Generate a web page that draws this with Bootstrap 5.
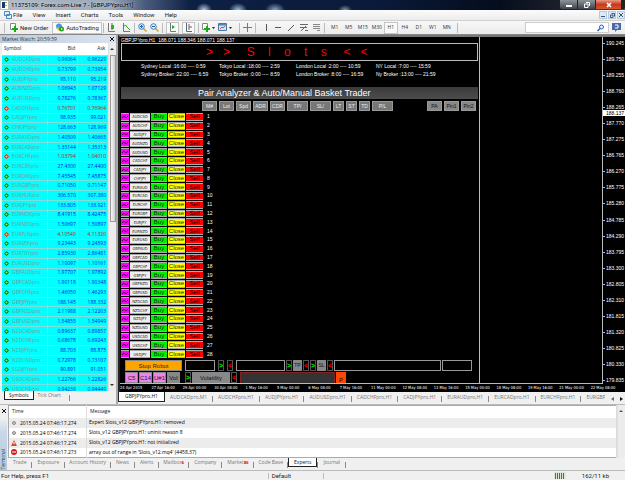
<!DOCTYPE html>
<html lang="en">
<head>
<meta charset="utf-8">
<meta name="viewport" content="width=device-width, initial-scale=1">
<title>11375109: Forex.com-Live 7 - [GBPJPYpro,H1]</title>
<link href="https://cdn.jsdelivr.net/npm/bootstrap@5.3.0/dist/css/bootstrap.min.css" rel="stylesheet">
<style>
body{font:5px/1 "Open Sans","Noto Sans",sans-serif;color:#222;background:#f0f0f0;height:100vh;overflow:hidden;white-space:nowrap}
button{font:inherit;color:inherit;background:none;border:0;padding:0;white-space:nowrap}
a{color:inherit;text-decoration:none}
svg{display:block;flex:none}
main{min-height:0}
.titlebar{height:10px;padding-left:1px;gap:3px;color:#000;background:radial-gradient(ellipse 8px 7px at 204px 10px,#b9cfe8,transparent),radial-gradient(ellipse 9px 7px at 238px 10px,#9dbfe4,transparent),radial-gradient(ellipse 10px 7px at 275px 10px,#8aa6c8,transparent),radial-gradient(ellipse 7px 5px at 345px 10px,#7f9a9a,transparent),linear-gradient(90deg,#b4bcc6 0,#9ba8b8 110px,#4a5c7e 145px,#0d2144 190px,#0a1a3a 60%,#050d1d 80%,#1c2029 90%,#4a4448)}
.titlebar h1{font:6px/10px Roboto,sans-serif;margin:0;text-shadow:0 0 3px #dde6f0}
.winbtns{height:9px;border-radius:0 0 2px 2px;overflow:hidden;gap:1px;background:#222}
.winbtns button{width:17px;background:linear-gradient(#8e9299,#3f444c);display:flex;align-items:center;justify-content:center}
.winbtns .shut{width:25px;background:linear-gradient(#e79a87,#c43a1e 50%,#d8572e)}
.menubar{height:11px;font:6px/1 Roboto,sans-serif;background:linear-gradient(#fbfbfb,#ececec);border-bottom:1px solid #d0d0d0}
.menulist{gap:10px;padding-left:1px}
.mdi{gap:1px}.mdi button{width:8px;height:8px;background:#dbe9f8;border:1px solid #b6cbe2;display:flex;align-items:center;justify-content:center}
.toolbar{height:14px;border-bottom:1px solid #888;gap:3px;background:linear-gradient(#f7f7f7,#ececec)}
.toolgroup{gap:1px;padding-left:4px}
.sep{width:1px;height:10px;background:#bbb;flex:none}
.toolbar button{display:flex;align-items:center;gap:1px}
.toolbar .text-tool{font:6px/1 Roboto,sans-serif;gap:2px;padding:0 3px}
.toolbar .pressed{background:#fafafa;border:1px solid #c4c4c4;height:12px;padding:0 2px}
.toolbar .period{width:14px;justify-content:center;color:#333;padding:0}
.searchbox{width:84px;height:11px;background:#fff;border:1px solid #ccc}
.searchbox input{border:0;font-size:6px;padding:0 2px;min-width:0;outline:0}
.watch{width:118px;flex:none;background:#f0f0f0;border-right:2px solid #a9a9a9}
.panelcap{height:8px;background:linear-gradient(90deg,#bccbdc,#dae4ef);color:#333;padding:0 2px}
.watchbox{margin-left:2px;background:#fff;overflow:hidden;min-height:0}
.quotes{border-collapse:collapse;width:100%;table-layout:fixed;height:calc(100% + 4px)}
.quotes th{height:12px;font-weight:400;background:#fff;padding:0 2px;border-bottom:1px solid #c8c8c8}
.quotes td{background:#00ffff;border:1px solid #7fdede;padding:0 1px;line-height:7px;color:#0018e8}
.quotes .num{text-align:right}
.quotes .sym{color:#7f9a9a;border-left:0;padding-left:2px}
.quotes .sym svg{display:inline-block;vertical-align:-1px;margin-right:3px}
.quotes .falling .num{color:#b02a20}
.scroller{width:8px;background:#ececec;flex:none;border-left:1px solid #ddd}
.thumb{height:48%;border:1px solid #999;background:linear-gradient(90deg,#f6f6f6,#cfcfcf);margin-left:1px}
.tabstrip{color:#777;flex:none}
.tabstrip .sel{background:#fff;border:1px solid #222;border-top:0;color:#111}
.watchtabs{height:13px}.watchtabs button{height:9px}
.chart{background:#000;color:#fff;font-family:"Liberation Sans",Arial,sans-serif;border-top:2px solid #777;border-left:2px solid #222}
.robot{flex:0 1 360px;border-right:1px solid #bbb;min-height:0}
.robotin{padding:0 1px;min-height:0}
.ohlc{height:6px;line-height:7px}
.slots{height:18px;border:1px solid #bbb;color:#f00;font-size:12px;line-height:17px;white-space:pre;padding-left:84px}
.clocks{display:grid;grid-template-columns:78px 77px 80px 1fr;padding:1px 0 0 20px;line-height:8px;color:#fff;height:17px}
.band{height:12px;margin-top:9px;font-size:9px;line-height:12px;padding-left:77px;background:linear-gradient(#3a3a3a,#4c4c4c)}
.heads{height:10px;margin-top:2px;padding:0 2px 0 81px;gap:2px}
.heads button{width:15px;background:#777;border:1px solid #999;color:#eee;line-height:8px}
.heads .wide{width:21px}.heads .slim{width:11px}
.heads .dk{color:#111;background:#888}
.pairs{margin-top:2px;grid-auto-rows:minmax(0,1fr);min-height:0}
.pair{display:grid;grid-template-columns:8px 20px 16px 17px 17px 1fr;grid-template-rows:minmax(0,1fr);gap:1px;padding-bottom:1px;min-height:0}
.pair button{line-height:5px;overflow:hidden;border:1px solid #aaa;border-width:1px 0;color:#222;min-height:0}
.pair .wave{background:#f0f;display:flex;align-items:center;justify-content:center}
.pair .nm{background:#eee;font-family:"DejaVu Sans Condensed","Liberation Sans",sans-serif;font-size:4px}
.pair .buy{background:#00f000;font-size:6px}.pair .cls{background:#ff0;font-size:6px}.pair .sell{background:#f00;font-size:6px;color:#100}
.pair span{padding-left:3px;align-self:center}
.ctl{display:flex;padding-left:4px;gap:1px;height:11px;margin-top:1px;flex:none}
.ctl>*{border:1px solid #888;display:flex;align-items:center;justify-content:center;flex:none}
.w6{width:6px}.w9{width:9px}.w13{width:13px}.w30{width:30px}.w38{width:38px}.w49{width:49px}.w57{width:57px}.w95{width:95px}.w107{width:107px}
.ctl .stop{background:orange;color:#321;font-size:6px}
.ctl .pink{background:#ee82ee;color:#222;font-size:6px}
.ctl .gry{background:#888;color:#111;font-size:6px}
.ctl .w9{font-size:5px}
.ctl .up,.ctl .dn{border-color:#555;font-size:7px;font-weight:700}
.ctl .up{color:#0f0}.ctl .dn{color:#f00}
.ctl .cell{border-color:#999}
.ctl .bar{background:#333;border-color:#822;border-bottom:0}
.ctl .flag{background:#ff4500;color:#300;border:0;width:10px;align-items:end;font-size:6px}
.ctl .gapr{margin-right:2px}.ctl .gapw{margin-right:4px}
.xaxis{height:8px;font:4px/7px "DejaVu Sans Condensed","Liberation Sans",sans-serif;display:grid;grid-template-columns:repeat(16,1fr);flex:none;margin-right:3px}
.xaxis span{min-width:0}
.plot{border-bottom:1px solid #bbb;min-height:0}
.blank{border-right:1px solid #bbb}
.yaxis{width:22px;flex:none;padding:4px 0 1px;justify-content:space-between}
.yaxis span{display:flex;align-items:center;line-height:5px}
.yaxis span::before{content:"";width:2px;height:1px;background:#bbb;margin-right:1px}
.last{position:absolute;left:0;right:0;top:21%;background:#fff;color:#000;padding-left:3px;line-height:6px}
.charttabs{height:12px;padding-right:2px;gap:6px}
.charttabs .tab{padding:0 5px;line-height:9px;height:10px;flex:none}
.charttabs .sel{padding:0 6px}
.charttabs .tab:last-child{padding-right:0}
.charttabs .sep,.logtabs .sep,.watchtabs .sep{height:6px;background:#888}
.terminal{border-top:1px solid #bbb;flex:none}
.side{width:7px;background:linear-gradient(#f0f0f0 20%,#c9d9ea 40%,#b5c8dd);flex:none;color:#234;margin-right:1px}
.side span{writing-mode:vertical-rl;transform:rotate(180deg);line-height:7px}
.log{border-collapse:collapse;width:100%;background:#fff;border:1px solid #aaa;table-layout:fixed}
.log th{font-weight:400;height:12px;padding:0 3px;border-right:1px solid #ddd}
.log td{height:10px;padding:0 2px;border-right:1px solid #ddd;color:#000}
.log tbody tr:nth-child(odd) td{background:#ececec}
.log svg{display:inline-block;vertical-align:-1px;margin-right:3px}
.log .when{width:78px}
.logtabs{height:12px}.logtabs button{padding:0 5px;height:9px;line-height:9px}
.logtabs button:nth-of-type(3n){padding:0 4px}
.logtabs small{color:#e00;font-size:4px;font-weight:700}
.statusbar{height:10px;border-top:1px solid #bbb;font:6px/1 Roboto,sans-serif;flex:none}
.statushelp{width:43%;border-right:1px solid #bbb;padding-left:1px}
.statusprofile{width:55px;border-right:1px solid #bbb;padding-left:3px}
</style>
<script src="https://cdn.jsdelivr.net/npm/bootstrap@5.3.0/dist/js/bootstrap.bundle.min.js"></script>
</head>
<body class="d-flex flex-column">
<header class="flex-shrink-0">
  <div class="titlebar d-flex align-items-center">
    <svg width="7" height="8" viewBox="0 0 7 8"><path d="M0 0h7v8H0z" fill="#fff"/><path d="M1 1h3v6H1z" fill="#123a6b"/><path d="M4 1h2v1H4zM4 4h2v1H4z" fill="#e0a020"/></svg>
    <h1>11375109: Forex.com-Live 7 - [GBPJPYpro,H1]</h1>
    <div class="winbtns d-flex ms-auto align-self-start">
      <button aria-label="Minimize"><svg width="6" height="5"><path d="M0 3h6v2H0z" fill="#fff"/></svg></button>
      <button aria-label="Restore"><svg width="6" height="6"><path d="M2 .5h3.500v3.500M.5 2h3.500v3.500H.5z" fill="none" stroke="#fff"/></svg></button>
      <button class="shut me-1" aria-label="Close"><svg width="6" height="6"><path d="M1 1l4 4M5 1L1 5" stroke="#fff" stroke-width="1.600"/></svg></button>
    </div>
  </div>
  <nav class="menubar d-flex align-items-center">
    <svg class="ms-1" width="8" height="8" viewBox="0 0 8 8"><path d="M.5.500h5v4h-5zM2.500 3.500h5v4h-5z" fill="#e8f2fb" stroke="#4a86c0"/></svg>
    <div class="menulist d-flex" id="menus"></div>
    <div class="mdi d-flex ms-auto">
      <button aria-label="Minimize chart"><svg width="4" height="4"><path d="M0 3h4v1H0z" fill="#357"/></svg></button>
      <button aria-label="Restore chart"><svg width="5" height="5"><path d="M1.500.500h3v3M.5 2h2.500v2.500H.5z" fill="none" stroke="#357"/></svg></button>
      <button aria-label="Close chart"><svg width="4" height="4"><path d="M0 0l4 4M4 0L0 4" stroke="#357"/></svg></button>
    </div>
  </nav>
  <div class="toolbar d-flex align-items-center">
    <div class="toolgroup d-flex align-items-center">
      <span class="sep"></span>
      <button class="text-tool"><svg width="9" height="9"><path d="M1.500.500h5v6h-5z" fill="#fff" stroke="#888"/><path d="M5 3h2v2h2v2H7v2H5V7H3V5h2z" fill="#18a818"/></svg>New Order</button>
      <button class="text-tool pressed"><svg width="9" height="9"><circle cx="4" cy="3.500" r="3" fill="#4a9ad4"/><path d="M1 4l3 4 2-3z" fill="#e6b83a"/><circle cx="6.500" cy="6" r="2.500" fill="#22a022"/><path d="M6 5l2 1-2 1z" fill="#fff"/></svg>AutoTrading</button>
      <span class="sep"></span>
    </div>
    <button class="me-1" aria-label="Candlesticks"><svg width="8" height="9"><path d="M1.500 0v8.500H8" fill="none" stroke="#777"/><path d="M5 0v7" stroke="#191"/><path d="M4 2h3v4H4z" fill="#3a3"/></svg></button>
    <button aria-label="Line chart"><svg width="9" height="9"><path d="M1.500 0v8.500H8" fill="none" stroke="#777"/><path d="M2 3q2-2 3 1l3 3" fill="none" stroke="#2a2"/></svg></button>
    <span class="sep"></span>
    <button aria-label="Zoom in"><svg width="9" height="9"><path d="M5.500 5.500l3 3" stroke="#c9a52c" stroke-width="1.500"/><circle cx="3.500" cy="3.500" r="2.800" fill="#dceefb" stroke="#3a7ec0"/><path d="M2 3.500h3M3.500 2v3" stroke="#2560a8"/></svg></button>
    <button aria-label="Zoom out"><svg width="9" height="9"><path d="M5.500 5.500l3 3" stroke="#c9a52c" stroke-width="1.500"/><circle cx="3.500" cy="3.500" r="2.800" fill="#dceefb" stroke="#3a7ec0"/><path d="M2 3.500h3" stroke="#2560a8"/></svg></button>
    <span class="sep"></span>
    <button class="pressed" aria-label="Auto scroll"><svg width="7" height="9"><path d="M1.500 0v8.500H7" fill="none" stroke="#777"/><path d="M3 2l3 2-3 2z" fill="#2a2"/></svg></button>
    <button class="pressed" aria-label="Chart shift"><svg width="7" height="9"><path d="M1.500 0v8.500H7M4 1v6" fill="none" stroke="#567"/><path d="M4 4h3" stroke="#c33"/></svg></button>
    <span class="sep"></span>
    <button aria-label="Indicators"><svg width="13" height="9"><path d="M.5.500h5v6h-5z" fill="#fff" stroke="#888"/><path d="M4 3h2v2h2v2H6v2H4V7H2V5h2z" fill="#18a818"/><path d="M10 4h3l-1.500 2z" fill="#222"/></svg></button>
    <button aria-label="Templates"><svg width="14" height="9"><path d="M.5.500h8v7h-8z" fill="#cfe3f6" stroke="#4779a8"/><path d="M1 1h7v1.500H1z" fill="#4a86c4"/><path d="M2 6l2-2 1 1 2-2" fill="none" stroke="#c55"/><path d="M11 4h3l-1.500 2z" fill="#222"/></svg></button>
    <span class="sep ms-1"></span>
    <button aria-label="Crosshair"><svg width="9" height="9"><path d="M4.500 0v9M0 4.500h9" stroke="#777"/></svg></button>
    <span class="sep"></span>
    <button class="ms-1" aria-label="Vertical line"><svg width="7" height="9"><path d="M3.500 1v7" stroke="#555"/></svg></button>
    <button aria-label="Horizontal line"><svg width="10" height="9"><path d="M2 4.500h6" stroke="#555"/></svg></button>
    <button aria-label="Trend line"><svg width="10" height="9"><path d="M2 8l6-6" stroke="#555"/></svg></button>
    <button aria-label="Fibonacci"><svg width="10" height="9"><path d="M1 1.500h8M1 4.500h7M2 8l5-5M6 7.500h3" stroke="#666" fill="none"/></svg></button>
    <button aria-label="Text"><svg width="9" height="9"><path d="M1 1.500h7M1 3.500h7M1 5.500h7M5 7.500h3" stroke="#888"/></svg></button>
    <span class="sep"></span>
    <div class="d-flex" id="periods"></div>
    <span class="sep"></span>
    <label class="searchbox d-flex align-items-center ms-auto"><input class="flex-grow-1" aria-label="Search"><svg class="me-1" width="7" height="8"><circle cx="4.500" cy="3" r="2" fill="#eaf3ff" stroke="#2c5fc0"/><path d="M3 4.500L.5 7" stroke="#2c5fc0" stroke-width="1.500"/></svg></label>
    <button class="me-1" aria-label="Messages"><svg width="9" height="9"><path d="M0 0h9v7H5L3 9V7H0z" fill="#4d68a8"/><path d="M3 2h3v3H3" fill="none" stroke="#fff"/></svg></button>
  </div>
</header>

<main class="d-flex flex-grow-1">
  <aside class="watch d-flex flex-column">
    <div class="panelcap d-flex align-items-center justify-content-between"><span>Market Watch: 20:59:59</span><button aria-label="Close panel"><svg width="4" height="4"><path d="M0 0l4 4M4 0L0 4" stroke="#111"/></svg></button></div>
    <div class="watchbox d-flex flex-grow-1">
      <div class="flex-grow-1 overflow-hidden h-100">
        <table class="quotes"><colgroup><col width="45"><col width="30"><col width="30"></colgroup><thead><tr><th>Symbol</th><th class="num">Bid</th><th class="num">Ask</th></tr></thead><tbody id="quotes"></tbody></table>
      </div>
      <div class="scroller d-flex flex-column"><svg class="mx-auto my-1" width="5" height="4"><path d="M0 3h4L2 1z" fill="#333"/></svg><div class="thumb"></div><svg class="mx-auto mt-auto mb-1" width="5" height="4"><path d="M0 1h4L2 3z" fill="#333"/></svg></div>
    </div>
    <div class="watchtabs tabstrip d-flex"><button class="sel px-1 ms-1">Symbols</button><button class="px-1 me-1">Tick Chart</button><span class="sep mt-1"></span></div>
  </aside>
  <section class="d-flex flex-column flex-grow-1 overflow-hidden">
    <div class="chart d-flex flex-column flex-grow-1 overflow-hidden">
      <div class="d-flex flex-grow-1 overflow-hidden">
        <div class="plot blank d-flex flex-grow-1">
          <div class="robot d-flex flex-column">
            <div class="robotin d-flex flex-column flex-grow-1">
              <div class="ohlc">GBPJPYpro,H1&nbsp; 188.071 188.346 188.071 188.137</div>
              <div class="slots">&gt;   &gt;     S    l    o    t    s     &lt;   &lt;</div>
              <div class="clocks"><span>Sydney Local :16:00 ---- 0:59</span><span>Tokyo Local :18:00 ---- 2:59</span><span>London Local :2:00 ---- 10:59</span><span>NY Local :7:00 ---- 15:59</span><span>Sydney Broker :22:00 ---- 6:59</span><span>Tokyo Broker :0:00 ---- 8:59</span><span>London Broker :8:00 ---- 16:59</span><span>Ny Broker :13:00 ---- 21:59</span></div>
              <div class="band">Pair Analyzer &amp; Auto/Manual Basket Trader</div>
              <div class="heads d-flex"><button>M#</button><button>Lot</button><button>Spd</button><button>ADR</button><button>CDR</button><button class="wide">TP/</button><button class="wide">SL/</button><button class="slim">LT</button><button class="slim">ST</button><button class="slim">TD</button><button class="wide me-auto">P/L</button><button class="dk">PA</button><button class="dk">Pin1</button><button class="dk">Pin2</button></div>
              <div class="pairs d-grid flex-grow-1" id="pairs"></div>
              <div class="ctl"><button class="stop w57 gapr">Stop Robot</button><span class="cell w30 gapr"></span><button class="up w6 gapr">&gt;</button><button class="dn w6 gapr">&lt;</button><span class="cell w49"></span><button class="up w6">&gt;</button><button class="gry w9">TP</button><button class="dn w6">&lt;</button><button class="up w6">&gt;</button><button class="gry w9">SL</button><button class="dn w6">&lt;</button><span class="cell w107"></span><span class="cell w30"></span></div>
              <div class="ctl"><button class="pink w13">C5</button><button class="pink w13">C14</button><button class="pink w13">U#1</button><button class="gry w13 gapw">Vol</button><button class="up w6">&gt;</button><button class="gry w38">Volatility</button><button class="dn w6 gapr">&lt;</button><span class="bar w95"></span><button class="flag">P</button></div>
            </div>
          </div>
        </div>
        <div class="yaxis d-flex flex-column position-relative" id="prices"></div>
      </div>
      <div class="xaxis" id="times"></div>
    </div>
    <div class="charttabs tabstrip d-flex"><div class="d-flex flex-grow-1 overflow-hidden" id="charts"></div><button aria-label="Scroll left"><svg width="3" height="5"><path d="M3 1v4L0 3z" fill="#666"/></svg></button><button aria-label="Scroll right"><svg width="3" height="5"><path d="M0 1v4l3-2z" fill="#111"/></svg></button></div>
  </section>
</main>

<section class="terminal d-flex">
  <div class="side d-flex flex-column align-items-center justify-content-between pt-1"><svg width="4" height="4"><path d="M0 0l4 4M4 0L0 4" stroke="#111"/></svg><span>Terminal</span></div>
  <div class="flex-grow-1">
    <div class="d-flex">
      <table class="log"><thead><tr><th class="when">Time</th><th>Message</th></tr></thead><tbody id="log"></tbody></table>
      <div class="scroller pt-1"><svg class="mx-auto" width="5" height="4"><path d="M0 3h4L2 1z" fill="#555"/></svg></div>
    </div>
    <div class="logtabs tabstrip d-flex" id="logtabs"></div>
  </div>
</section>
<footer class="statusbar d-flex align-items-center">
  <div class="statushelp">For Help, press F1</div>
  <div class="statusprofile">Default</div>
  <svg class="ms-auto me-3" width="12" height="7"><path d="M0 0h12v7H0z" fill="#dfe8d8"/><path d="M1.500 1v6M3.500 1v6M5.500 1v6M7.500 1v6M9.500 1v6" stroke="#2a8a2a"/></svg>
  <span class="me-3">162/11 kb</span>
</footer>
<script>
const $ = id => document.getElementById(id);
$('menus').innerHTML = 'File,View,Insert,Charts,Tools,Window,Help'.split(',').map(t => `<a href="#">${t}</a>`).join('');
$('periods').innerHTML = 'M1,M5,M15,M30,H1,H4,D1,W1,MN'.split(',').map(t => `<button class="period ${t == 'H1' ? 'pressed' : ''}">${t}</button>`).join('');
const quotes = `AUDCAD 0.96064 0.96229,AUDCHF 0.73799 0.73954,AUDJPY 95.110 95.219,AUDNZD 1.06943 1.07129,AUDUSD 0.78276 0.78367,CADCHF 0.76701 0.76964,CADJPY 98.935 99.021,CHFJPY 128.663 128.969,EURAUD 1.40509 1.40665,EURCAD 1.35144 1.35313,EURCHF 1.03794 1.04010,EURCZK 27.4300 27.4400,EURDKK 7.45545 7.45875,EURGBP 0.71050 0.71147,EURHUF 306.570 307.380,EURJPY 133.805 133.921,EURNOK 8.41915 8.42475,EURNZD 1.50697 1.50897,EURPLN 4.10540 4.11320,EURSEK 9.23443 9.24593,EURTRY 2.85930 2.86481,EURUSD 1.10097 1.10161,GBPAUD 1.97707 1.97892,GBPCAD 1.90118 1.90348,GBPCHF 1.46050 1.46293,GBPJPY 188.145 188.332,GBPNZD 2.11988 2.12203,GBPUSD 1.54855 1.54949,NZDCAD 0.89637 0.89857,NZDCHF 0.68678 0.69243,NZDJPY 88.703 88.875,NZDUSD 0.72978 0.73107,SGDJPY 90.891 91.051,USDCAD 1.22766 1.22826,USDCHF 0.94239 0.94449`.split(',');
$('quotes').innerHTML = quotes.map(q => {
  const [s, b, a] = q.split(' '), fall = /CADCHF|EURCHF|EURPLN/.test(s);
  return `<tr class="${fall ? 'falling' : ''}"><td class="sym"><svg width="5" height="5"><path d="M2.500 0L5 2.500 2.500 5 0 2.500z" fill="${fall ? '#e02a10' : '#087008'}"/><path d="M2.500 1.500v2M1.500 2.500h2" stroke="${fall ? '#fb8' : '#6f6'}"/></svg>${s}pro</td><td class="num">${b}</td><td class="num">${a}</td></tr>`;
}).join('');
const pairs = 'AUDCAD AUDCHF AUDJPY AUDNZD AUDUSD CADCHF CADJPY CHFJPY EURAUD EURCAD EURCHF EURGBP EURJPY EURNZD EURUSD GBPAUD GBPCAD GBPCHF GBPJPY GBPNZD GBPUSD NZDCAD NZDCHF NZDJPY NZDUSD USDCAD USDCHF USDJPY'.split(' ');
$('pairs').innerHTML = pairs.map((p, i) => `<div class="pair"><button class="wave" aria-label="Chart ${p}"><svg width="6" height="4"><path d="M0 3q1.500-3 3-1t3-1" fill="none" stroke="#303"/></svg></button><button class="nm">${p}</button><button class="buy">Buy</button><button class="cls">Close</button><button class="sell">Sell</button><span>${i + 1}</span></div>`).join('');
$('prices').innerHTML = '190.245 189.750 189.255 188.760 188.265 187.770 187.275 186.765 186.270 185.775 185.280 184.785 184.290 183.795 183.300 182.805 182.310 181.815 181.320 180.825 180.330 179.835'.split(' ').map(t => `<span>${t}</span>`).join('') + '<div class="last">188.137</div>';
$('times').innerHTML = '24 Apr 2015,27 Apr 16:00,29 Apr 00:00,30 Apr 08:00,1 May 16:00,5 May 00:00,6 May 08:00,7 May 16:00,11 May 00:00,12 May 08:00,13 May 16:00,15 May 00:00,18 May 08:00,19 May 16:00,21 May 00:00,22 May 08:00'.split(',').map(t => `<span>${t}</span>`).join('');
$('charts').innerHTML = 'GBPJPYpro,H1 AUDCADpro,M1 AUDCHFpro,H1 AUDJPYpro,H1 AUDUSDpro,H1 CADCHFpro,H1 CADJPYpro,H1 EURAUDpro,H1 EURCADpro,H1 EURCHFpro,H1 EURGBP'.split(' ').map((t, i) => (i > 1 ? '<span class="sep mt-1"></span>' : '') + `<button class="tab ${i ? '' : 'sel'}">${t}</button>`).join('');
const marks = {
  dot: '<svg width="6" height="6"><circle cx="3" cy="3" r="1.500" fill="#ccc" stroke="#888"/></svg>',
  warn: '<svg width="6" height="6"><path d="M3 0l3 6H0z" fill="#d8501c"/><path d="M3 2v2" stroke="#fff"/></svg>',
  stop: '<svg width="6" height="6"><circle cx="3" cy="3" r="3" fill="#d81818"/><path d="M1 3h4" stroke="#fff"/></svg>'
};
$('log').innerHTML = [['dot', '274', 'Expert Slots_v12 GBPJPYpro,H1: removed'], ['dot', '274', 'Slots_v12 GBPJPYpro,H1: uninit reason 8'], ['warn', '274', 'Slots_v12 GBPJPYpro,H1: not initialized'], ['stop', '273', "array out of range in 'Slots_v12.mq4' (4458,37)"]].map(r => `<tr><td>${marks[r[0]]}2015.05.24 07:46:17.${r[1]}</td><td>${r[2]}</td></tr>`).join('');
$('logtabs').innerHTML = ['Trade', 'Exposure', 'Account History', 'News', 'Alerts', 'Mailbox<small>6</small>', 'Company', 'Market<small>86</small>', 'Code Base', 'Experts', 'Journal'].map(t => `<button class="${t == 'Experts' ? 'sel' : ''}">${t}</button><span class="sep mt-1"></span>`).join('');
</script>
</body>
</html>
